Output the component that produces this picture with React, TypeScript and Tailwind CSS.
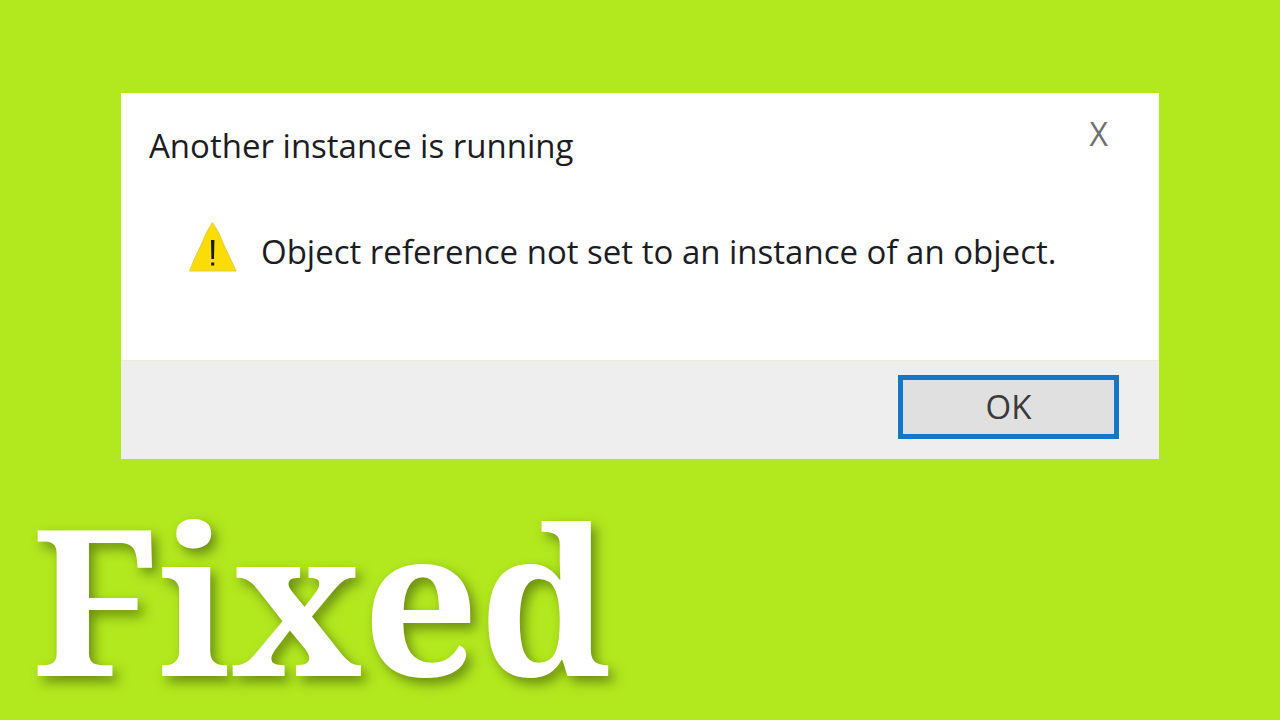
import React, { useState } from 'react';

const App = () => {
    const [open, setOpen] = useState(true);

    return (
        <main className="min-h-screen bg-[#b2e81e] pt-[93px]">
            <section
                role="dialog"
                aria-labelledby="dialog-title"
                aria-describedby="dialog-message"
                className={`mx-[121px] bg-white font-['Open_Sans',sans-serif] ${open ? '' : 'invisible'}`}
            >
                <div className="pr-12 pb-[88px] pl-7">
                    <header className="flex items-start justify-between pt-[21px]">
                        <h1 id="dialog-title" className="pt-3 text-[33px] leading-[40px] text-[#1c1c24]">Another instance is running</h1>
                        <button type="button" aria-label="Close" onClick={() => setOpen(false)} className="px-[3px] text-[32px] leading-[40px] text-[#707070]">X</button>
                    </header>

                    <div className="mt-14 flex items-end gap-6 pl-10">
                        <svg viewBox="0 0 48 50" className="h-[50px] w-12 shrink-0" aria-hidden="true">
                            <path d="M23.5 0.5 C22 3 16 12 13.500 20 L5 38 L0.5 49 H47 L42 38 L33.500 20 C31 12 25 3 23.500 0.5 Z" fill="#fbdc04" stroke="#e6cb3c" strokeWidth="1" />
                            <path d="M22 18h3.400l-.4 19h-2.600zM22.200 40.500h3v3h-3z" fill="#1c1a08" />
                        </svg>
                        <p id="dialog-message" className="text-[33px] leading-[40px] text-[#1c1c24]">Object reference not set to an instance of an object.</p>
                    </div>
                </div>

                <footer className="flex justify-end border-t border-[#ecebda] bg-[#eeeeee] pt-3.5 pr-10 pb-5">
                    <button type="button" onClick={() => setOpen(false)} className="h-16 w-[221px] border-[5px] border-[#1676c4] bg-[#e0e0e0] text-[33px] leading-[40px] text-[#3a3a3a] shadow-[inset_0_0_2px_1px_#cfe6f8]">OK</button>
                </footer>
            </section>

            <p className="pt-7 pl-8 font-['Noto_Serif','DejaVu_Serif',serif] text-[204px] leading-[220px] font-bold text-white [text-shadow:5px_6px_12px_rgba(60,80,10,0.6)]">Fixed</p>
        </main>
    );
};

export default App;
